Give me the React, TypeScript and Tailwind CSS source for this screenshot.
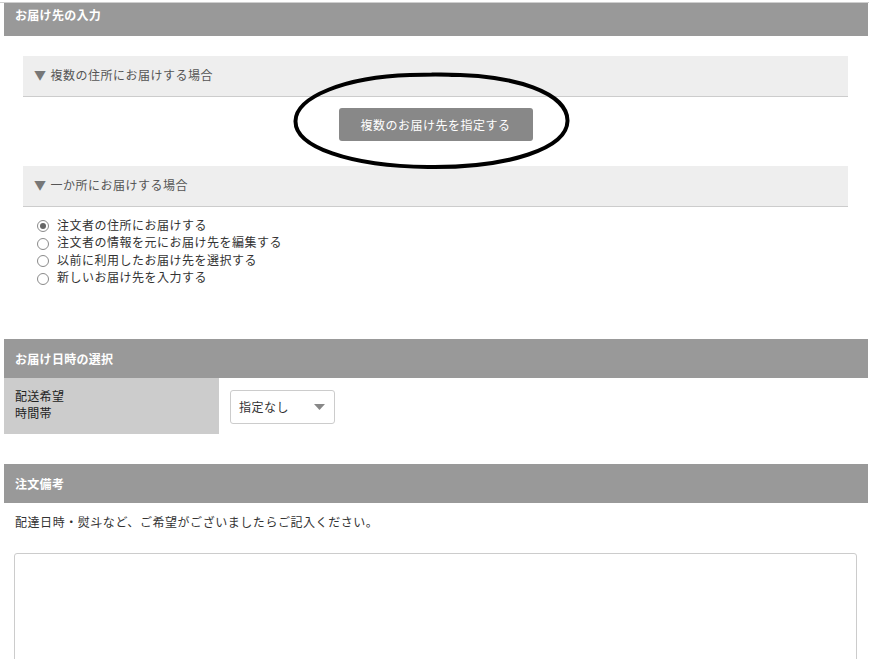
import React from "react";

const font = { fontFamily: '"Noto Sans CJK JP", "Noto Sans", sans-serif' };

function SectionHeader({ title, className = "" }: { title: string; className?: string }) {
  return (
    <div
      className={`ml-[4px] w-[864px] bg-[#999999] text-white font-bold text-[12px] tracking-[0.3px] pl-[11px] flex items-center ${className}`}
    >
      {title}
    </div>
  );
}

function Radio({ checked, label }: { checked?: boolean; label: string }) {
  return (
    <label className="flex items-center h-[17.5px] text-[12px] tracking-[0.5px] text-[#333]">
      <span className="mt-[3px] w-[12px] h-[12px] rounded-full border border-[#8a8a8a] bg-white flex items-center justify-center shrink-0">
        {checked && <span className="w-[6px] h-[6px] rounded-full bg-[#666]" />}
      </span>
      <span className="ml-[8px]">{label}</span>
    </label>
  );
}

export default function App() {
  return (
    <div className="relative w-[870px] min-h-[659px] bg-white overflow-hidden" style={font}>
      <div className="pt-[2px]">
        <div className="h-px w-[869px] bg-[#cfcfcf]" />
      </div>

      {/* お届け先の入力 */}
      <SectionHeader title="お届け先の入力" className="h-[33px] pb-[9px]" />
      <div className="ml-[23px] w-[825px] mt-[20px]">
        <div className="h-[41px] bg-[#eeeeee] border-b border-[#cccccc] flex items-center pl-[11px] pb-[3px] text-[12px] tracking-[0.5px] text-[#555]">
          <span className="text-[#777] mr-[4px]">▼</span>複数の住所にお届けする場合
        </div>
        <div className="flex justify-center mt-[11px]">
          <button className="w-[194px] h-[33px] rounded-[3px] bg-[#888888] text-white text-[12px] tracking-[0.5px]">
            複数のお届け先を指定する
          </button>
        </div>
        <div className="mt-[25px] h-[41px] bg-[#eeeeee] border-b border-[#cccccc] flex items-center pl-[11px] pb-[3px] text-[12px] tracking-[0.5px] text-[#555]">
          <span className="text-[#777] mr-[4px]">▼</span>一か所にお届けする場合
        </div>
        <div className="mt-[9px] ml-[14px] flex flex-col">
          <Radio checked label="注文者の住所にお届けする" />
          <Radio label="注文者の情報を元にお届け先を編集する" />
          <Radio label="以前に利用したお届け先を選択する" />
          <Radio label="新しいお届け先を入力する" />
        </div>
      </div>

      {/* お届け日時の選択 */}
      <SectionHeader title="お届け日時の選択" className="h-[39px] mt-[53px]" />
      <div className="ml-[4px] w-[864px] flex h-[56px]">
        <div className="w-[215px] bg-[#cccccc] pl-[11px] pt-[9px] text-[12px] leading-[17px] tracking-[0.3px] text-[#222]">
          配送希望
          <br />
          時間帯
        </div>
        <div className="ml-[11px] mt-[12px]">
          <div className="w-[105px] h-[34px] border border-[#cccccc] rounded-[3px] bg-white flex items-center justify-between pl-[8px] pr-[9px] text-[12px] tracking-[0.5px] text-[#333]">
            <span>指定なし</span>
            <svg width="11" height="6" viewBox="0 0 11 6">
              <path d="M0 0 L11 0 L5.5 6 Z" fill="#888" />
            </svg>
          </div>
        </div>
      </div>

      {/* 注文備考 */}
      <SectionHeader title="注文備考" className="h-[39px] mt-[30px]" />
      <p className="ml-[15px] mt-[10px] text-[12px] leading-[17px] tracking-[0.55px] text-[#333]">
        配達日時・熨斗など、ご希望がございましたらご記入ください。
      </p>
      <div className="ml-[14px] mt-[23px] w-[843px]">
        <textarea className="block w-full h-[160px] border border-[#cccccc] rounded-[3px] resize-none outline-none" />
      </div>

      {/* hand-drawn annotation */}
      <svg className="absolute left-0 top-0 pointer-events-none" width="870" height="659">
        <path
          d="M432 74.5 C 520 73, 568 95, 567.5 121 C 567 148, 510 168, 428 167 C 350 166, 295 147, 295.5 121 C 296 97, 345 77, 410 75 C 425 74.5, 440 74, 452 75"
          fill="none"
          stroke="#000"
          strokeWidth="4"
          strokeLinecap="round"
        />
      </svg>
    </div>
  );
}
